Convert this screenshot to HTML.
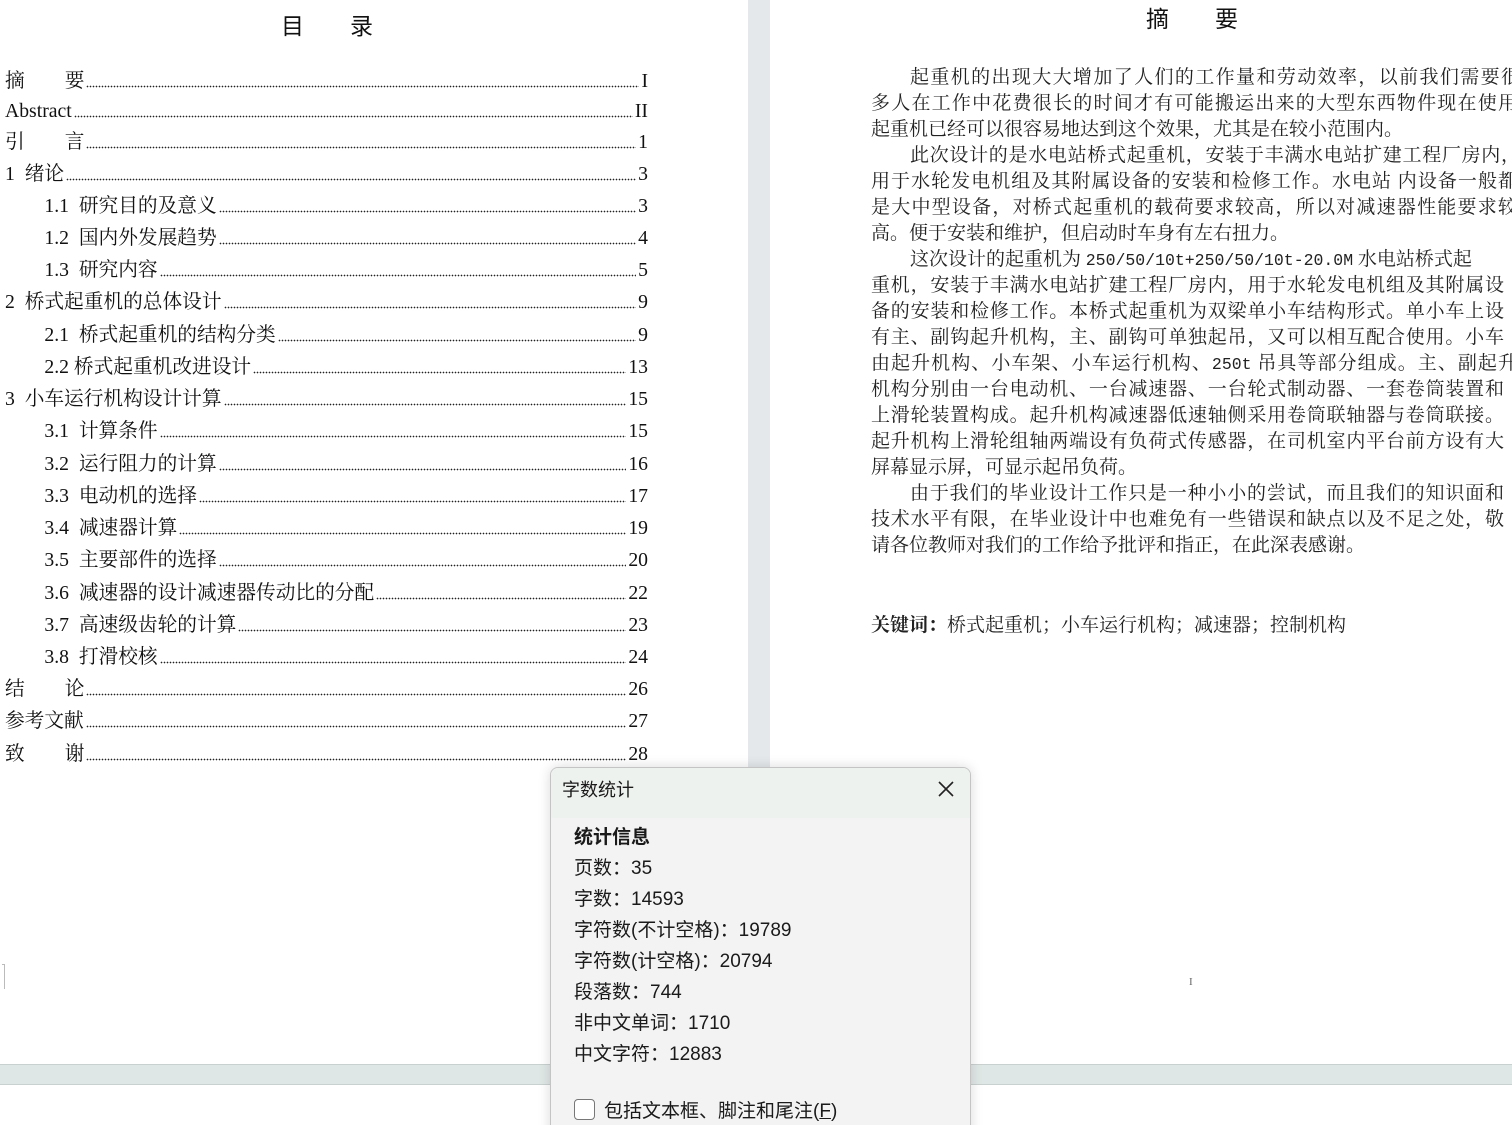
<!DOCTYPE html>
<html><head><meta charset="utf-8"><style>
*{margin:0;padding:0;box-sizing:border-box}
html,body{width:1512px;height:1125px;overflow:hidden;background:#fff;position:relative}
body{font-family:"Liberation Serif","Noto Serif CJK SC",serif;color:#111}
.gap{position:absolute;left:748px;top:0;width:22px;height:1064px;background:#e4e8ea}
.band{position:absolute;left:0;top:1064px;width:1512px;height:21px;background:#dfe7e6;border-top:1px solid #c9d0d0;border-bottom:1px solid #c9d0d0}
.h{position:absolute;font-family:"Liberation Sans","Noto Sans CJK SC",sans-serif;font-size:23px;white-space:pre;color:#111}
.toc{position:absolute;left:5px;width:643px;height:24px;display:flex;align-items:flex-end;font-size:19.7px;line-height:24px;white-space:pre}
.toc .d{flex:1;height:3px;margin:0 2px 5px 2px;background-image:radial-gradient(circle,#222 0.7px,transparent 0.9px);background-size:3px 3px;background-repeat:repeat-x}
.ln{position:absolute;left:871px;width:646px;font-size:19px;line-height:24px;white-space:nowrap;text-align:justify;text-align-last:justify;color:#222}
.ln.nj{text-align-last:left;text-align:left}
.m{font-family:"Liberation Mono",monospace;font-size:16.5px}
.dlg{position:absolute;left:550px;top:767px;width:421px;height:380px;background:#f3f3f3;border:1px solid #c4c4c4;border-radius:8px;box-shadow:0 0 12px rgba(0,0,0,.15);font-family:"Liberation Sans","Noto Sans CJK SC",sans-serif;color:#1a1a1a;overflow:hidden}
.dlg .hd{height:50px;background:#eef2ee}
.dlg .t{position:absolute;left:11px;top:8px;font-size:18px}
.dlg .r{position:absolute;left:23px;font-size:19px;white-space:pre}
</style></head><body>
<div class="gap"></div>
<div class="band"></div>
<div style="position:absolute;left:2px;top:964px;width:3px;height:25px;border:1px solid #bbb;border-left:none;border-bottom:none"></div>

<div class="h" style="left:281px;top:7px">目<span style="margin-left:46px">录</span></div>
<div class="h" style="left:1146px;top:0px">摘<span style="margin-left:46px">要</span></div>

<div class="toc" style="top:69px"><span>摘<span style="margin-left:40px">要</span></span><span class="d"></span><span>I</span></div>
<div class="toc" style="top:99px"><span>Abstract</span><span class="d"></span><span>II</span></div>
<div class="toc" style="top:130px"><span>引<span style="margin-left:40px">言</span></span><span class="d"></span><span>1</span></div>
<div class="toc" style="top:162px"><span>1  绪论</span><span class="d"></span><span>3</span></div>
<div class="toc" style="top:194px"><span>        1.1  研究目的及意义</span><span class="d"></span><span>3</span></div>
<div class="toc" style="top:226px"><span>        1.2  国内外发展趋势</span><span class="d"></span><span>4</span></div>
<div class="toc" style="top:258px"><span>        1.3  研究内容</span><span class="d"></span><span>5</span></div>
<div class="toc" style="top:290px"><span>2  桥式起重机的总体设计</span><span class="d"></span><span>9</span></div>
<div class="toc" style="top:323px"><span>        2.1  桥式起重机的结构分类</span><span class="d"></span><span>9</span></div>
<div class="toc" style="top:355px"><span>        2.2 桥式起重机改进设计</span><span class="d"></span><span>13</span></div>
<div class="toc" style="top:387px"><span>3  小车运行机构设计计算</span><span class="d"></span><span>15</span></div>
<div class="toc" style="top:419px"><span>        3.1  计算条件</span><span class="d"></span><span>15</span></div>
<div class="toc" style="top:452px"><span>        3.2  运行阻力的计算</span><span class="d"></span><span>16</span></div>
<div class="toc" style="top:484px"><span>        3.3  电动机的选择</span><span class="d"></span><span>17</span></div>
<div class="toc" style="top:516px"><span>        3.4  减速器计算</span><span class="d"></span><span>19</span></div>
<div class="toc" style="top:548px"><span>        3.5  主要部件的选择</span><span class="d"></span><span>20</span></div>
<div class="toc" style="top:581px"><span>        3.6  减速器的设计减速器传动比的分配</span><span class="d"></span><span>22</span></div>
<div class="toc" style="top:613px"><span>        3.7  高速级齿轮的计算</span><span class="d"></span><span>23</span></div>
<div class="toc" style="top:645px"><span>        3.8  打滑校核</span><span class="d"></span><span>24</span></div>
<div class="toc" style="top:677px"><span>结<span style="margin-left:40px">论</span></span><span class="d"></span><span>26</span></div>
<div class="toc" style="top:709px"><span>参考文献</span><span class="d"></span><span>27</span></div>
<div class="toc" style="top:742px"><span>致<span style="margin-left:40px">谢</span></span><span class="d"></span><span>28</span></div>

<div class="ln" style="top:66px;left:910px;width:610px">起重机的出现大大增加了人们的工作量和劳动效率，以前我们需要很</div>
<div class="ln" style="top:92px">多人在工作中花费很长的时间才有可能搬运出来的大型东西物件现在使用</div>
<div class="ln nj" style="top:118px">起重机已经可以很容易地达到这个效果，尤其是在较小范围内。</div>
<div class="ln" style="top:144px;left:910px;width:610px">此次设计的是水电站桥式起重机，安装于丰满水电站扩建工程厂房内，</div>
<div class="ln" style="top:170px">用于水轮发电机组及其附属设备的安装和检修工作。水电站 内设备一般都</div>
<div class="ln" style="top:196px">是大中型设备，对桥式起重机的载荷要求较高，所以对减速器性能要求较</div>
<div class="ln nj" style="top:222px">高。便于安装和维护，但启动时车身有左右扭力。</div>
<div class="ln nj" style="top:248px;left:910px">这次设计的起重机为 <span class="m">250/50/10t+250/50/10t-20.0M</span> 水电站桥式起</div>
<div class="ln" style="top:274px;width:633px">重机，安装于丰满水电站扩建工程厂房内，用于水轮发电机组及其附属设</div>
<div class="ln" style="top:300px;width:633px">备的安装和检修工作。本桥式起重机为双梁单小车结构形式。单小车上设</div>
<div class="ln" style="top:326px;width:633px">有主、副钩起升机构，主、副钩可单独起吊，又可以相互配合使用。小车</div>
<div class="ln" style="top:352px;width:646px">由起升机构、小车架、小车运行机构、<span class="m">250t</span> 吊具等部分组成。主、副起升</div>
<div class="ln" style="top:378px;width:633px">机构分别由一台电动机、一台减速器、一台轮式制动器、一套卷筒装置和</div>
<div class="ln" style="top:404px;width:633px">上滑轮装置构成。起升机构减速器低速轴侧采用卷筒联轴器与卷筒联接。</div>
<div class="ln" style="top:430px;width:633px">起升机构上滑轮组轴两端设有负荷式传感器，在司机室内平台前方设有大</div>
<div class="ln nj" style="top:456px">屏幕显示屏，可显示起吊负荷。</div>
<div class="ln" style="top:482px;left:910px;width:594px">由于我们的毕业设计工作只是一种小小的尝试，而且我们的知识面和</div>
<div class="ln" style="top:508px;width:633px">技术水平有限，在毕业设计中也难免有一些错误和缺点以及不足之处，敬</div>
<div class="ln nj" style="top:534px">请各位教师对我们的工作给予批评和指正，在此深表感谢。</div>
<div class="ln nj" style="top:614px"><b>关键词：</b>桥式起重机；小车运行机构；减速器；控制机构</div>
<div style="position:absolute;left:1189px;top:976px;font-size:11px;color:#666">I</div>

<div class="dlg">
<div class="hd"></div>
<div class="t">字数统计</div>
<svg style="position:absolute;left:386px;top:12px" width="18" height="18" viewBox="0 0 18 18"><path d="M2 2L16 16M16 2L2 16" stroke="#222" stroke-width="1.6"/></svg>
<div class="r" style="top:54px;font-weight:bold">统计信息</div>
<div class="r" style="top:85px">页数：35</div>
<div class="r" style="top:116px">字数：14593</div>
<div class="r" style="top:147px">字符数(不计空格)：19789</div>
<div class="r" style="top:178px">字符数(计空格)：20794</div>
<div class="r" style="top:209px">段落数：744</div>
<div class="r" style="top:240px">非中文单词：1710</div>
<div class="r" style="top:271px">中文字符：12883</div>
<div style="position:absolute;left:23px;top:331px;width:21px;height:21px;border:1px solid #777;border-radius:4px;background:#fff"></div>
<div class="r" style="top:328px;left:53px">包括文本框、脚注和尾注(<u>F</u>)</div>
</div>
</body></html>
